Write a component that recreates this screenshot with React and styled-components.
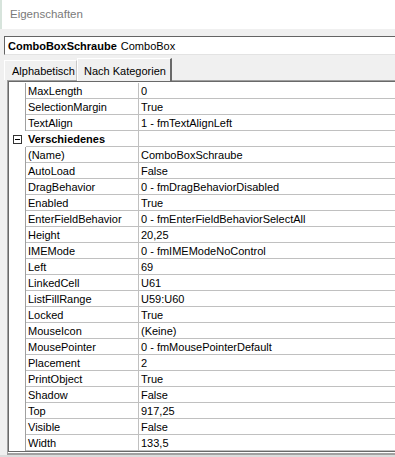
import styled, { createGlobalStyle } from "styled-components";

const GlobalStyle = createGlobalStyle`
  html, body {
    margin: 0;
    padding: 0;
    background: #f0f0f0;
    overflow: hidden;
  }
  body {
    font-family: "Liberation Sans", Arial, sans-serif;
    font-size: 11px;
    color: #000;
  }
`;

const rows = [
  { name: "MaxLength", value: "0" },
  { name: "SelectionMargin", value: "True" },
  { name: "TextAlign", value: "1 - fmTextAlignLeft" },
  { category: "Verschiedenes" },
  { name: "(Name)", value: "ComboBoxSchraube" },
  { name: "AutoLoad", value: "False" },
  { name: "DragBehavior", value: "0 - fmDragBehaviorDisabled" },
  { name: "Enabled", value: "True" },
  { name: "EnterFieldBehavior", value: "0 - fmEnterFieldBehaviorSelectAll" },
  { name: "Height", value: "20,25" },
  { name: "IMEMode", value: "0 - fmIMEModeNoControl" },
  { name: "Left", value: "69" },
  { name: "LinkedCell", value: "U61" },
  { name: "ListFillRange", value: "U59:U60" },
  { name: "Locked", value: "True" },
  { name: "MouseIcon", value: "(Keine)" },
  { name: "MousePointer", value: "0 - fmMousePointerDefault" },
  { name: "Placement", value: "2" },
  { name: "PrintObject", value: "True" },
  { name: "Shadow", value: "False" },
  { name: "Top", value: "917,25" },
  { name: "Visible", value: "False" },
  { name: "Width", value: "133,5" },
];

const Window = styled.div`
  width: 395px;
  height: 457px;
  display: flex;
  flex-direction: column;
  overflow: hidden;
`;

const TitleBar = styled.div`
  height: 29px;
  background: #fff;
  display: flex;
  align-items: center;
  padding: 0 0 2px 8px;
  font-family: "Liberation Sans", Arial, sans-serif;
  font-size: 11.5px;
  color: #7a7a7a;
  border-left: 2px solid #d7e4dc;
  box-sizing: border-box;
`;

const Body = styled.div`
  flex: 1;
  display: flex;
  flex-direction: column;
  padding: 7px 0 0 4px;
  min-height: 0;
`;

const ObjectBox = styled.div`
  height: 19px;
  box-sizing: border-box;
  background: #fff;
  border-top: 1px solid #646464;
  border-left: 1px solid #646464;
  border-bottom: 1px solid #e3e3e3;
  display: flex;
  align-items: center;
  gap: 4px;
  padding-left: 3px;
`;

const ObjectName = styled.span`
  font-weight: bold;
`;

const TabRow = styled.div`
  display: flex;
  align-items: flex-end;
  height: 23px;
  margin-top: 2px;
`;

const Tab = styled.div`
  box-sizing: border-box;
  height: ${(p) => (p.$active ? "23px" : "20px")};
  padding: ${(p) => (p.$active ? "1px 0 0 6px" : "1px 0 0 7px")};
  display: flex;
  align-items: center;
  white-space: nowrap;
  background: #f0f0f0;
  border-top: 1px solid #fff;
  border-left: 1px solid #fff;
  border-right: ${(p) => (p.$active ? "2px solid #696969" : "1px solid #c8c8c8")};
  margin-bottom: ${(p) => (p.$active ? "-1px" : "0")};
  position: relative;
  z-index: ${(p) => (p.$active ? 1 : 0)};
  width: ${(p) => p.$width}px;
`;

const GridFrame = styled.div`
  flex: 1;
  display: flex;
  flex-direction: column;
  border-top: 1px solid #a0a0a0;
  border-left: 1px solid #a0a0a0;
  margin-left: 3px;
  min-height: 0;
`;

const GridInner = styled.div`
  flex: 1;
  border-top: 1px solid #696969;
  border-left: 1px solid #696969;
  border-bottom: 1px solid #696969;
  box-shadow: 0 1px 0 #fff, 0 3px 0 #a0a0a0;
  background: #fff;
  display: flex;
  flex-direction: column;
  padding-top: 1px;
  margin-bottom: 3px;
`;

const Row = styled.div`
  display: grid;
  grid-template-columns: 17px 113px 1fr;
  height: 16px;
`;

const Margin = styled.div`
  border-right: ${(p) => (p.$open ? "none" : "1px solid #a0a0a0")};
  display: flex;
  align-items: center;
  justify-content: center;
`;

const Cell = styled.div`
  box-sizing: border-box;
  border-bottom: 1px solid #c0c0c0;
  border-right: ${(p) => (p.$first ? "1px solid #c0c0c0" : "none")};
  padding-left: 2px;
  display: flex;
  align-items: center;
  white-space: nowrap;
  overflow: hidden;
  font-weight: ${(p) => (p.$bold ? "bold" : "normal")};
`;

const Toggle = styled.div`
  width: 9px;
  height: 9px;
  box-sizing: border-box;
  border: 1px solid #333;
  background: #fff;
  position: relative;
  &::after {
    content: "";
    position: absolute;
    left: 1px;
    right: 1px;
    top: 3px;
    height: 1px;
    background: #000;
  }
`;

const StatusStrip = styled.div`
  height: 2px;
  background: #dcdcdc;
`;

function PropertyRow({ row }) {
  if (row.category) {
    return (
      <Row>
        <Margin $open>
          <Toggle />
        </Margin>
        <Cell $first $bold>
          {row.category}
        </Cell>
        <Cell />
      </Row>
    );
  }
  return (
    <Row>
      <Margin />
      <Cell $first>{row.name}</Cell>
      <Cell>{row.value}</Cell>
    </Row>
  );
}

export default function App() {
  return (
    <>
      <GlobalStyle />
      <Window>
        <TitleBar>Eigenschaften</TitleBar>
        <Body>
          <ObjectBox>
            <ObjectName>ComboBoxSchraube</ObjectName>
            <span>ComboBox</span>
          </ObjectBox>
          <TabRow>
            <Tab $width={73}>Alphabetisch</Tab>
            <Tab $active $width={95}>Nach Kategorien</Tab>
          </TabRow>
          <GridFrame>
            <GridInner>
              {rows.map((row, i) => (
                <PropertyRow key={i} row={row} />
              ))}
            </GridInner>
          </GridFrame>
        </Body>
        <StatusStrip />
      </Window>
    </>
  );
}
